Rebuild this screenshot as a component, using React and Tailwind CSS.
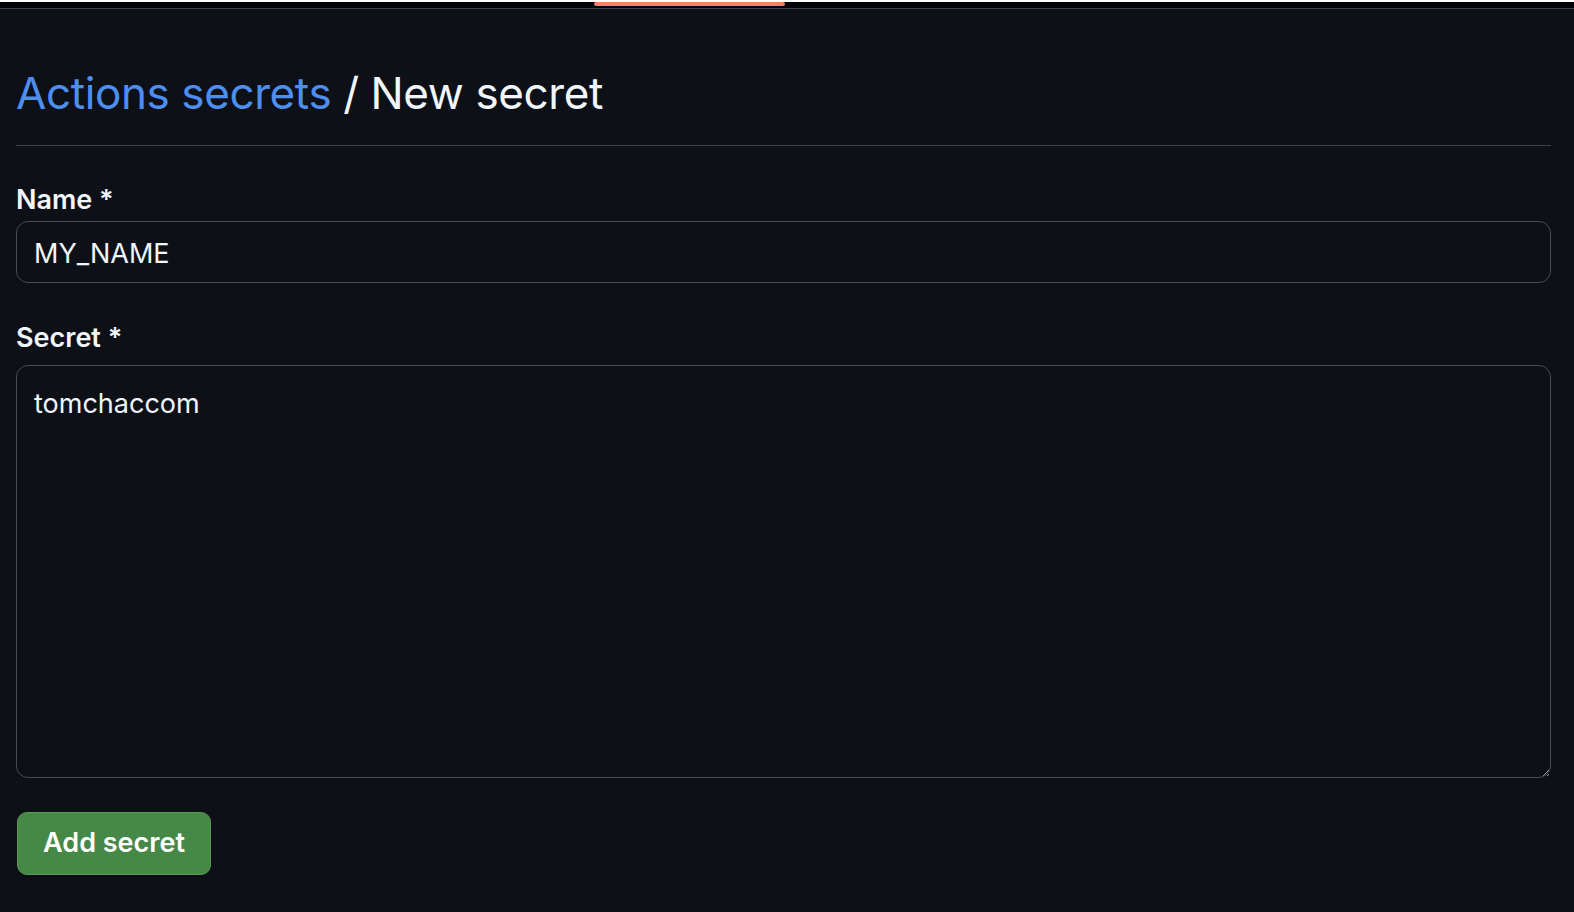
import React from 'react';

export default function App() {
    return (
        <div className="min-h-[912px] w-full bg-[#0d1117] text-[#f0f6fc] [font-family:Inter,'Liberation_Sans',sans-serif]">
            <div className="h-[7px] bg-[#010409] border-b border-[#3d444d]">
                <div className="ml-[594px] mt-[2px] h-[4px] w-[191px] rounded-full bg-[#f78166]" />
            </div>

            <div className="pl-4 pr-[23px]">
                <div className="mt-[56px] pb-[24px] border-b border-[#3d444d]">
                    <h1 className="text-[44px] leading-[56px] font-normal tracking-[-0.4px]">
                        <a href="#" className="text-[#4d8ef0]">Actions secrets</a>
                        <span> / New secret</span>
                    </h1>
                </div>

                <form>
                    <label htmlFor="secret-name" className="block mt-[37px] mb-[4px] text-[27px] leading-[34px] font-semibold">
                        Name *
                    </label>
                    <input
                        id="secret-name"
                        type="text"
                        readOnly
                        defaultValue="MY_NAME"
                        className="block w-full h-[62px] pl-[17px] pt-[2px] rounded-[12px] border border-[#474d56] bg-[#0d1117] text-[27px] text-[#f0f6fc] outline-none"
                    />

                    <label htmlFor="secret-value" className="block mt-[38px] mb-[10px] text-[27px] leading-[34px] font-semibold">
                        Secret *
                    </label>
                    <textarea
                        id="secret-value"
                        readOnly
                        defaultValue="tomchaccom"
                        className="block w-full h-[413px] pl-[17px] pt-[18px] rounded-[12px] border border-[#474d56] bg-[#0d1117] text-[27px] leading-[40px] text-[#f0f6fc] outline-none resize-y [color-scheme:dark]"
                    />

                    <button
                        type="button"
                        className="mt-[34px] ml-px w-[194px] h-[63px] rounded-[10px] border border-[#5a9957] bg-[#468846] text-[27px] font-semibold text-white shadow-sm"
                    >
                        Add secret
                    </button>
                </form>
            </div>
        </div>
    );
}
